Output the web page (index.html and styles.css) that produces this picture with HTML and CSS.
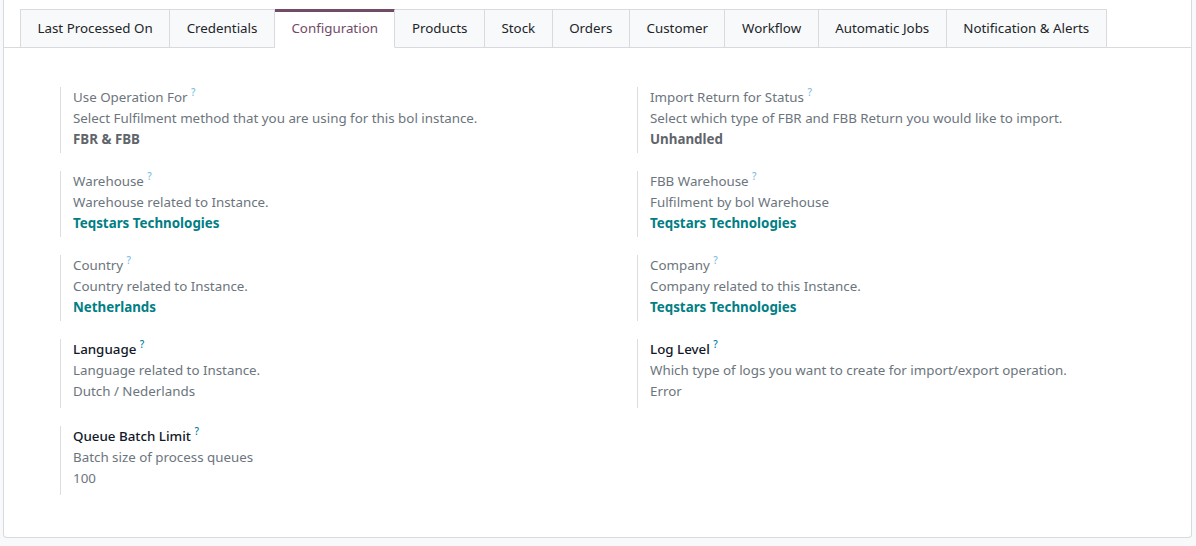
FILE: index.html
```html
<!DOCTYPE html>
<html>
<head>
    <title>Instance Configuration</title>
    <link rel="stylesheet" href="styles.css">
</head>
<body>
    <div class="sheet">
        <ul class="tabs">
            <li class="tab">Last Processed On</li>
            <li class="tab">Credentials</li>
            <li class="tab active">Configuration</li>
            <li class="tab">Products</li>
            <li class="tab">Stock</li>
            <li class="tab">Orders</li>
            <li class="tab">Customer</li>
            <li class="tab">Workflow</li>
            <li class="tab">Automatic Jobs</li>
            <li class="tab">Notification &amp; Alerts</li>
        </ul>

        <div class="fields">
            <div class="field">
                <div class="label">Use Operation For <sup>?</sup></div>
                <div class="help">Select Fulfilment method that you are using for this bol instance.</div>
                <div class="value strong">FBR &amp; FBB</div>
            </div>
            <div class="field">
                <div class="label">Import Return for Status <sup>?</sup></div>
                <div class="help">Select which type of FBR and FBB Return you would like to import.</div>
                <div class="value strong">Unhandled</div>
            </div>

            <div class="field">
                <div class="label">Warehouse <sup>?</sup></div>
                <div class="help">Warehouse related to Instance.</div>
                <div class="value link">Teqstars Technologies</div>
            </div>
            <div class="field">
                <div class="label">FBB Warehouse <sup>?</sup></div>
                <div class="help">Fulfilment by bol Warehouse</div>
                <div class="value link">Teqstars Technologies</div>
            </div>

            <div class="field">
                <div class="label">Country <sup>?</sup></div>
                <div class="help">Country related to Instance.</div>
                <div class="value link">Netherlands</div>
            </div>
            <div class="field">
                <div class="label">Company <sup>?</sup></div>
                <div class="help">Company related to this Instance.</div>
                <div class="value link">Teqstars Technologies</div>
            </div>

            <div class="field editable">
                <div class="label">Language <sup>?</sup></div>
                <div class="help">Language related to Instance.</div>
                <div class="value">Dutch / Nederlands</div>
            </div>
            <div class="field editable">
                <div class="label">Log Level <sup>?</sup></div>
                <div class="help">Which type of logs you want to create for import/export operation.</div>
                <div class="value">Error</div>
            </div>

            <div class="field editable">
                <div class="label">Queue Batch Limit <sup>?</sup></div>
                <div class="help">Batch size of process queues</div>
                <div class="value">100</div>
            </div>
        </div>
    </div>
</body>
</html>
```

FILE: styles.css
```css
body {
    margin: 0;
    background: #f8f9fa;
    font-family: "Noto Sans", sans-serif;
    font-size: 13.35px;
    color: #495057;
}
.sheet {
    background: #fff;
    margin: 0 4px 0 3px;
    height: 538px;
    box-sizing: border-box;
    border: 1px solid #d8dadd;
    border-top: none;
    border-radius: 0 0 4px 4px;
    padding-top: 9px;
}
.tabs {
    display: flex;
    list-style: none;
    margin: 0;
    padding: 0 0 0 16px;
    border-bottom: 1px solid #d8dadd;
}
.tab {
    padding: 0 16.5px;
    height: 37px;
    line-height: 36px;
    background: #f8f9fa;
    border: 1px solid #d8dadd;
    border-left: none;
    margin-bottom: -1px;
    color: #212529;
    white-space: nowrap;
}
.tab:first-child { border-left: 1px solid #d8dadd; }
.tab.active {
    background: #fff;
    color: #714b67;
    border-top-color: #714b67;
    box-shadow: inset 0 2px #714b67;
    border-bottom-color: #fff;
}
.fields {
    display: grid;
    grid-template-columns: 577px 1fr;
    row-gap: 18px;
    padding: 39px 0 0 56px;
}
.field {
    border-left: 1px solid #dcdde0;
    padding: 0 0 3px 12px;
    line-height: 21px;
}
.field.editable { padding-bottom: 6px; }
.label {
    color: #6c757d;
}
.editable .label {
    color: #111827;
    font-weight: 500;
}
.label sup {
    color: #7fbfdc;
    font-size: 10px;
    font-weight: 500;
    vertical-align: 6px;
    line-height: 0;
}
.editable .label sup { color: #0180a5; }
.help { color: #6c757d; }
.value { color: #6c757d; }
.value.strong { font-weight: 700; color: #5f656b; }
.value.link { font-weight: 700; color: #017e84; }
```
